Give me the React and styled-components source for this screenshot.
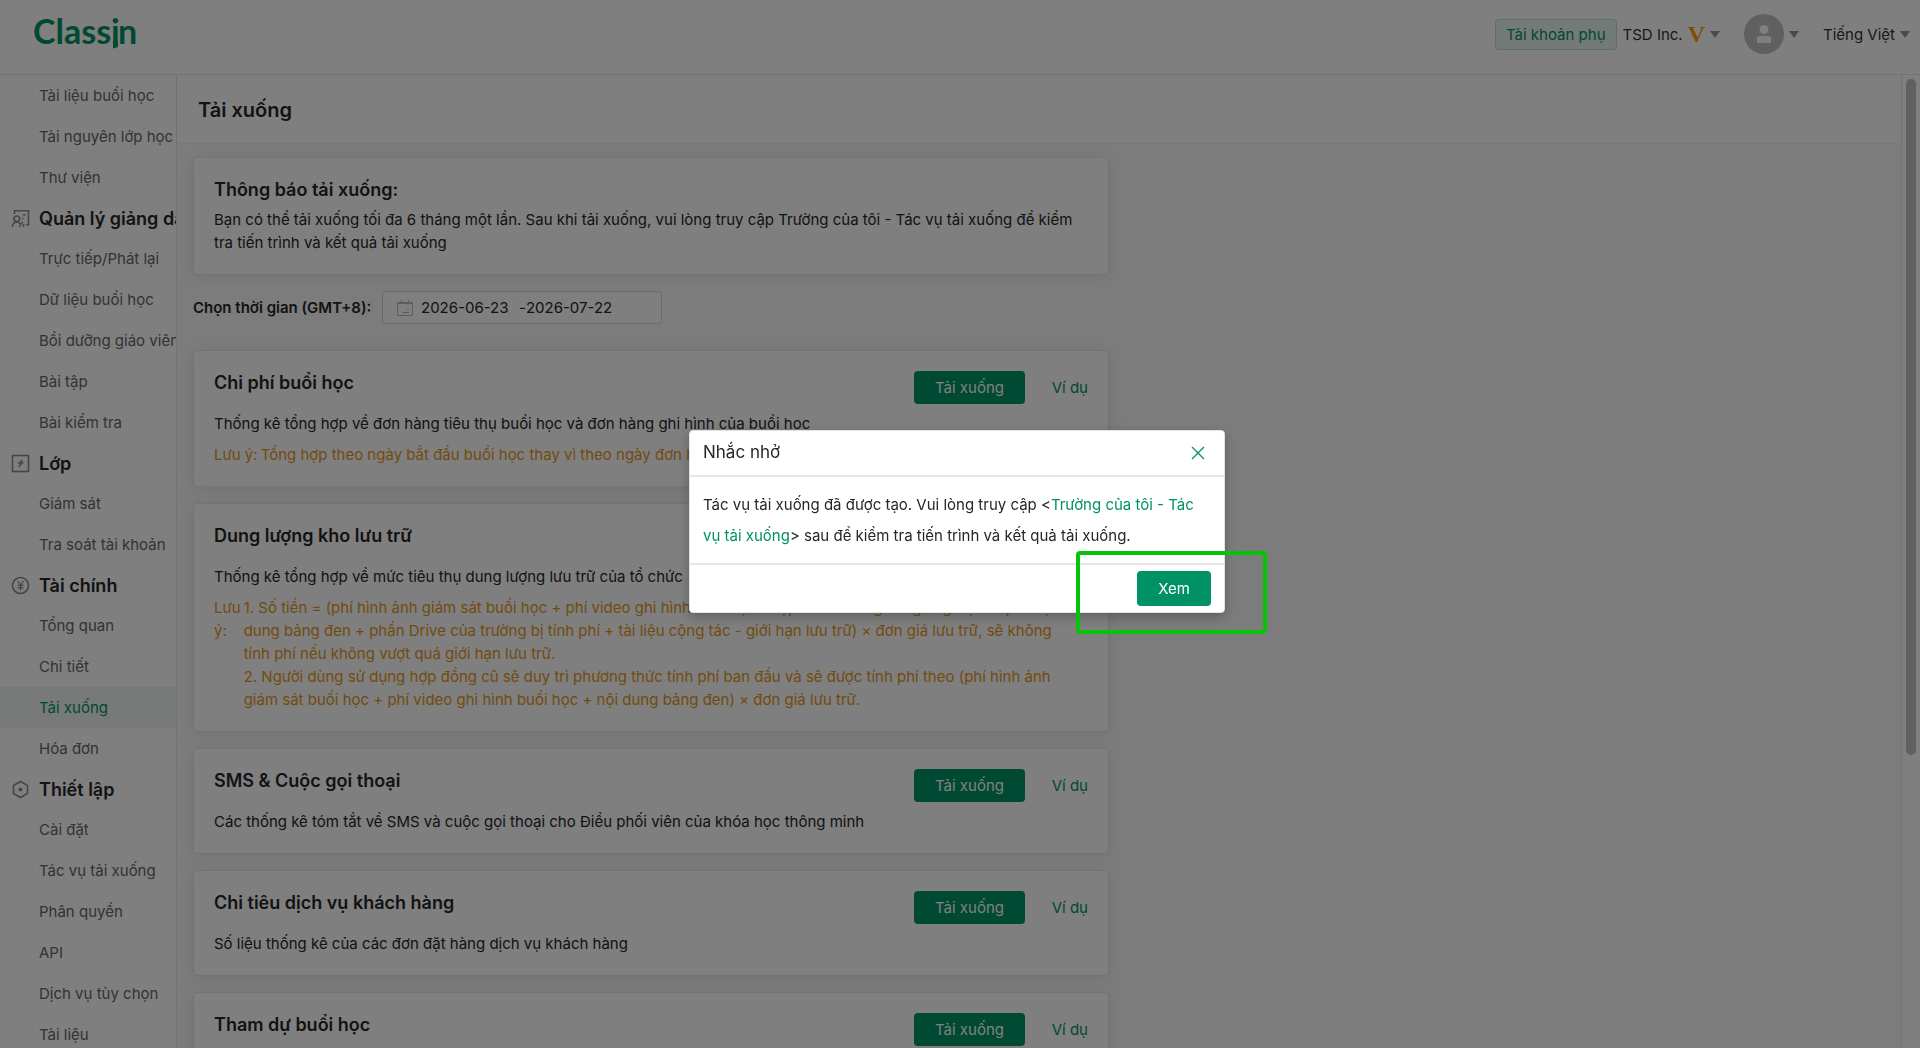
import React from "react";
import styled, { createGlobalStyle } from "styled-components";

const GlobalStyle = createGlobalStyle`
	* {
		box-sizing: border-box;
	}

	html,
	body,
	#root {
		height: 100%;
	}

	body {
		margin: 0;
		overflow: hidden;
		color: #262626;
		font-family: Inter, "Liberation Sans", sans-serif;
		font-size: 15px;
		line-height: 23px;
	}

	button,
	input {
		font: inherit;
	}
`;

const Page = styled.div`
	display: flex;
	flex-direction: column;
	height: 100%;
	background: #fff;
`;

const Header = styled.header`
	display: flex;
	flex: none;
	align-items: center;
	justify-content: space-between;
	height: 75px;
	padding: 0 10px 6px 34px;
	border-bottom: 1px solid #e2e6e4;
`;

const Account = styled.div`
	display: flex;
	align-items: center;
`;

const Badge = styled.span`
	margin-right: 6px;
	padding: 3px 10px;
	border: 1px solid #b2dfd0;
	border-radius: 4px;
	background: #e6f4ef;
	color: #009265;
`;

const MenuButton = styled.button`
	display: flex;
	align-items: center;
	gap: 5px;
	margin-left: ${(props) => (props.$spaced ? "24px" : "0")};
	padding: 0;
	border: 0;
	background: none;
	color: #333;
`;

const Verified = styled.span`
	color: #ff9c00;
	font-family: "Liberation Serif", serif;
	font-size: 24px;
	font-weight: 700;
`;

const Avatar = styled.span`
	display: flex;
	align-items: center;
	justify-content: center;
	width: 40px;
	height: 40px;
	border-radius: 50%;
	background: #c0c0c0;
`;

const Body = styled.div`
	display: flex;
	flex: 1;
	min-height: 0;
`;

const Sidebar = styled.nav`
	flex: none;
	width: 177px;
	overflow: hidden;
	border-right: 1px solid #e2e6e4;
`;

const NavHeading = styled.h2`
	display: flex;
	align-items: center;
	gap: 9px;
	height: 40px;
	margin: 0;
	padding-left: 11px;
	font-size: 18px;
	font-weight: 600;
	white-space: nowrap;

	svg {
		flex: none;
	}
`;

const NavLink = styled.a`
	display: block;
	height: 41px;
	padding-left: 39px;
	background: ${(props) => (props.$active ? "#eef5f2" : "none")};
	color: ${(props) => (props.$active ? "#009265" : "#666")};
	line-height: 41px;
	text-decoration: none;
	white-space: nowrap;
`;

const Main = styled.main`
	flex: 1;
	min-width: 0;
	overflow: hidden;
	background: #f6f8f7;
`;

const TitleBar = styled.div`
	display: flex;
	align-items: center;
	height: 69px;
	padding: 2px 0 0 21px;
	border-bottom: 1px solid #f0f2f1;
	background: #fff;
`;

const Title = styled.h1`
	margin: 0;
	font-size: 20px;
	font-weight: 600;
`;

const Content = styled.div`
	display: flex;
	flex-direction: column;
	gap: 16px;
	max-width: 948px;
	padding: 13px 16px;
`;

const Card = styled.section`
	display: flex;
	justify-content: space-between;
	padding: 20px;
	border: 1px solid #e4e7e6;
	border-radius: 4px;
	background: #fff;
	box-shadow: 0 2px 16px rgba(0, 60, 40, 0.08);
`;

const CardText = styled.div`
	flex: 1;
`;

const CardTitle = styled.h3`
	margin: 0 0 ${(props) => (props.$tight ? "7px" : "18px")};
	font-size: 18px;
	font-weight: 600;
`;

const Paragraph = styled.p`
	margin: 0;
`;

const Note = styled.div`
	display: flex;
	gap: 3px;
	margin-top: 8px;
	padding-right: 12px;
	color: #e3971c;
`;

const NoteLabel = styled.span`
	flex: none;
	width: ${(props) => (props.$stacked ? "min-content" : "auto")};
`;

const Actions = styled.div`
	display: flex;
	flex: none;
	align-items: flex-start;
	justify-content: space-between;
	width: 174px;
	margin-left: -174px;
`;

const PrimaryButton = styled.button`
	flex: none;
	padding: ${(props) => (props.$large ? "6px 21px" : "5px 21px")};
	border: 0;
	border-radius: 4px;
	background: #009265;
	color: #fff;
`;

const ExampleLink = styled.a`
	color: #009265;
	line-height: 33px;
	text-decoration: none;
	white-space: nowrap;
`;

const DateRow = styled.div`
	display: flex;
	align-items: center;
	gap: 5px;
	margin-bottom: 10px;
	font-weight: 600;

	label {
		min-width: 184px;
	}
`;

const DateBox = styled.div`
	display: flex;
	align-items: center;
	width: 280px;
	height: 33px;
	padding-left: 14px;
	border: 1px solid #d4d8d6;
	border-radius: 4px;
	background: #fff;
	font-weight: 400;

	svg {
		margin-right: 8px;
	}
`;

const DateInput = styled.input`
	width: 98px;
	padding: 0;
	border: 0;
	outline: 0;
	background: none;
	color: #262626;
`;

const Scrollbar = styled.div`
	flex: none;
	width: 19px;
	padding: 4px;
	border-left: 1px solid #e2e6e4;
`;

const ScrollThumb = styled.div`
	width: 10px;
	height: 70%;
	border-radius: 5px;
	background: #c1c1c1;
`;

const Overlay = styled.div`
	position: fixed;
	inset: 0;
	display: flex;
	align-items: center;
	justify-content: center;
	padding: 0 6px 6px 0;
	background: rgba(0, 0, 0, 0.5);
`;

const Dialog = styled.div`
	position: relative;
	width: 536px;
	border: 1px solid #e2e2e2;
	border-radius: 4px;
	background: #fff;
	box-shadow: 0 4px 12px rgba(0, 0, 0, 0.25);
`;

const DialogHeader = styled.div`
	display: flex;
	align-items: center;
	justify-content: space-between;
	height: 46px;
	padding: 0 19px 0 13px;
	border-bottom: 2px solid #e5e5e5;
`;

const DialogTitle = styled.h2`
	margin: 0;
	font-size: 17px;
	font-weight: 400;
`;

const CloseButton = styled.button`
	display: flex;
	padding: 0;
	border: 0;
	background: none;
	color: #009265;
`;

const DialogBody = styled.p`
	margin: 0;
	padding: 12px 13px;
	line-height: 31px;

	a {
		color: #009265;
		text-decoration: none;
	}
`;

const DialogFooter = styled.div`
	display: flex;
	justify-content: flex-end;
	padding: 6px 13px;
	border-top: 2px solid #e5e5e5;
`;

const Highlight = styled.div`
	position: absolute;
	right: -43px;
	bottom: -22px;
	width: 191px;
	height: 83px;
	border: 4px solid #08c408;
	border-radius: 4px;
	pointer-events: none;
`;

const navGroups = [
	{
		items: ["Tài liệu buổi học", "Tài nguyên lớp học", "Thư viện"],
	},
	{
		title: "Quản lý giảng dạy",
		icon: "teaching",
		items: [
			"Trực tiếp/Phát lại",
			"Dữ liệu buổi học",
			"Bồi dưỡng giáo viên",
			"Bài tập",
			"Bài kiểm tra",
		],
	},
	{
		title: "Lớp",
		icon: "lesson",
		items: ["Giám sát", "Tra soát tài khoản"],
	},
	{
		title: "Tài chính",
		icon: "finance",
		items: ["Tổng quan", "Chi tiết", "Tải xuống", "Hóa đơn"],
	},
	{
		title: "Thiết lập",
		icon: "settings",
		items: [
			"Cài đặt",
			"Tác vụ tải xuống",
			"Phân quyền",
			"API",
			"Dịch vụ tùy chọn",
			"Tài liệu",
		],
	},
];

const reports = [
	{
		title: "Chi phí buổi học",
		text: "Thống kê tổng hợp về đơn hàng tiêu thụ buổi học và đơn hàng ghi hình của buổi học",
		notes: ["Tổng hợp theo ngày bắt đầu buổi học thay vì theo ngày đơn hàng"],
	},
	{
		title: "Dung lượng kho lưu trữ",
		text: "Thống kê tổng hợp về mức tiêu thụ dung lượng lưu trữ của tổ chức",
		notes: [
			"1. Số tiền = (phí hình ảnh giám sát buổi học + phí video ghi hình buổi học + tệp tin có trong bài giảng trực tiếp + nội dung bảng đen + phần Drive của trường bị tính phí + tài liệu cộng tác - giới hạn lưu trữ) × đơn giá lưu trữ, sẽ không tính phí nếu không vượt quá giới hạn lưu trữ.",
			"2. Người dùng sử dụng hợp đồng cũ sẽ duy trì phương thức tính phí ban đầu và sẽ được tính phí theo (phí hình ảnh giám sát buổi học + phí video ghi hình buổi học + nội dung bảng đen) × đơn giá lưu trữ.",
		],
	},
	{
		title: "SMS & Cuộc gọi thoại",
		text: "Các thống kê tóm tắt về SMS và cuộc gọi thoại cho Điều phối viên của khóa học thông minh",
	},
	{
		title: "Chi tiêu dịch vụ khách hàng",
		text: "Số liệu thống kê của các đơn đặt hàng dịch vụ khách hàng",
	},
	{
		title: "Tham dự buổi học",
		text: "Thống kê tổng hợp về việc tham dự buổi học",
	},
];

function Logo() {
	return (
		<svg width="106" height="34" viewBox="0 0 106 34" role="img" aria-label="Classin">
			<text y="27" fill="#009265" fontFamily="Lato, sans-serif" fontSize="34" fontWeight="700">
				<tspan x="-1">Class</tspan>
				<tspan x="77">i</tspan>
				<tspan x="84">n</tspan>
			</text>
			<path d="M79 24h5v6l-5 1.500z" fill="#009265" />
		</svg>
	);
}

function Caret() {
	return (
		<svg width="10" height="7" viewBox="0 0 10 7" aria-hidden="true">
			<path d="M0 0h10L5 7z" fill="#8f9693" />
		</svg>
	);
}

function NavIcon({ name }) {
	return (
		<svg
			width="19"
			height="19"
			viewBox="0 0 19 19"
			fill="none"
			stroke="#8c8c8c"
			strokeWidth="1.6"
			aria-hidden="true"
		>
			{name === "teaching" && (
				<>
					<path d="M3.5 5V1.800h14v14H15" />
					<circle cx="5.800" cy="9.800" r="2.800" />
					<path d="M1.300 18c.2-3 1.800-5 4.500-5 1.700 0 2.800.8 3.700 2.200L12 13M8.800 18v-1.500M12.500 18v-3M12 6h2.500M11 9.500h1.500" />
				</>
			)}
			{name === "lesson" && (
				<>
					<rect x="1.500" y="1.500" width="16" height="16" />
					<path d="M11.500 6L8 9h3.500L7.500 13" strokeWidth="1.400" />
				</>
			)}
			{name === "finance" && (
				<>
					<circle cx="9.500" cy="9.500" r="8" />
					<path d="M6.500 5l3 4 3-4M6.500 9.300h6M6.500 11.800h6M9.500 9v5.500" strokeWidth="1.200" />
				</>
			)}
			{name === "settings" && (
				<>
					<path d="M9.500 1.500l7 4v8l-7 4-7-4v-8z" />
					<circle cx="9.500" cy="9.500" r="1.200" fill="#8c8c8c" />
				</>
			)}
		</svg>
	);
}

function CalendarIcon() {
	return (
		<svg width="16" height="16" viewBox="0 0 16 16" fill="none" stroke="#b8b8b8" aria-hidden="true">
			<path d="M.5 2.500h15v13H.5zM.5 3.500h15M4.500 0v4M11.500 0v4M6 12.500h6M10 9.500h2" />
		</svg>
	);
}

function ReportCard({ title, text, notes }) {
	return (
		<Card>
			<CardText>
				<CardTitle>{title}</CardTitle>
				<Paragraph>{text}</Paragraph>
				{notes && (
					<Note>
						<NoteLabel $stacked={notes.length > 1}>Lưu ý:</NoteLabel>
						<div>
							{notes.map((note) => (
								<div key={note}>{note}</div>
							))}
						</div>
					</Note>
				)}
			</CardText>
			<Actions>
				<PrimaryButton type="button">Tải xuống</PrimaryButton>
				<ExampleLink href="#example">Ví dụ</ExampleLink>
			</Actions>
		</Card>
	);
}

export default function App() {
	return (
		<>
			<GlobalStyle />
			<Page>
				<Header>
					<Logo />
					<Account>
						<Badge>Tài khoản phụ</Badge>
						<MenuButton type="button">
							TSD Inc. <Verified>V</Verified>
							<Caret />
						</MenuButton>
						<MenuButton type="button" $spaced aria-label="Tài khoản">
							<Avatar>
								<svg width="14" height="18" viewBox="0 0 14 18" fill="#fff" aria-hidden="true">
									<circle cx="7" cy="4.500" r="4.500" />
									<path d="M0 18v-4a3 3 0 0 1 3-3h8a3 3 0 0 1 3 3v4z" />
								</svg>
							</Avatar>
							<Caret />
						</MenuButton>
						<MenuButton type="button" $spaced>
							Tiếng Việt
							<Caret />
						</MenuButton>
					</Account>
				</Header>
				<Body>
					<Sidebar>
						{navGroups.map((group) => (
							<div key={group.items[0]}>
								{group.title && (
									<NavHeading>
										<NavIcon name={group.icon} />
										{group.title}
									</NavHeading>
								)}
								{group.items.map((item) => (
									<NavLink key={item} href="#nav" $active={item === "Tải xuống"}>
										{item}
									</NavLink>
								))}
							</div>
						))}
					</Sidebar>
					<Main>
						<TitleBar>
							<Title>Tải xuống</Title>
						</TitleBar>
						<Content>
							<Card>
								<CardText>
									<CardTitle $tight>Thông báo tải xuống:</CardTitle>
									<Paragraph>
										Bạn có thể tải xuống tối đa 6 tháng một lần. Sau khi tải xuống, vui lòng
										truy cập Trường của tôi - Tác vụ tải xuống để kiểm tra tiến trình và kết
										quả tải xuống
									</Paragraph>
								</CardText>
							</Card>
							<DateRow>
								<label htmlFor="date-from">Chọn thời gian (GMT+8):</label>
								<DateBox>
									<CalendarIcon />
									<DateInput id="date-from" defaultValue="2026-06-23" />
									-
									<DateInput aria-label="Đến ngày" defaultValue="2026-07-22" />
								</DateBox>
							</DateRow>
							{reports.map((report) => (
								<ReportCard key={report.title} {...report} />
							))}
						</Content>
					</Main>
					<Scrollbar>
						<ScrollThumb />
					</Scrollbar>
				</Body>
			</Page>
			<Overlay>
				<Dialog role="dialog" aria-labelledby="dialog-title">
					<DialogHeader>
						<DialogTitle id="dialog-title">Nhắc nhở</DialogTitle>
						<CloseButton type="button" aria-label="Đóng">
							<svg width="14" height="14" viewBox="0 0 14 14" stroke="currentColor" strokeWidth="1.300">
								<path d="M1 1l12 12M13 1L1 13" />
							</svg>
						</CloseButton>
					</DialogHeader>
					<DialogBody>
						Tác vụ tải xuống đã được tạo. Vui lòng truy cập &lt;
						<a href="#tasks">Trường của tôi - Tác vụ tải xuống</a>&gt; sau để kiểm tra tiến
						trình và kết quả tải xuống.
					</DialogBody>
					<DialogFooter>
						<PrimaryButton type="button" $large>
							Xem
						</PrimaryButton>
					</DialogFooter>
					<Highlight />
				</Dialog>
			</Overlay>
		</>
	);
}
